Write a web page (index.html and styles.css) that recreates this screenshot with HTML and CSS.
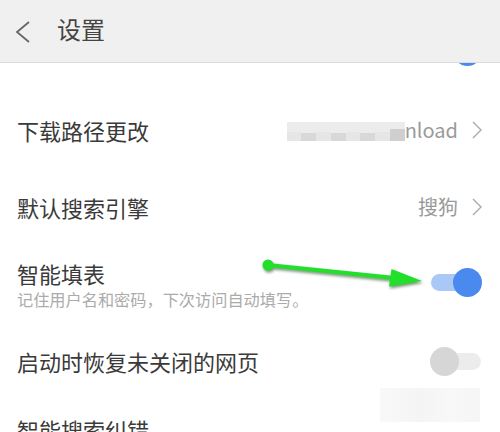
FILE: index.html
```html
<!DOCTYPE html>
<html lang="zh-CN">
<head>
<meta charset="utf-8">
<title>设置</title>
<link rel="stylesheet" href="styles.css">
</head>
<body>
<div class="page">
  <header class="header">
    <svg class="back" width="16" height="22" viewBox="0 0 16 22"><path d="M14 1 L2 11 L14 21" fill="none" stroke="#666" stroke-width="1.8"/></svg>
    <span class="title">设置</span>
  </header>
  <div class="list">
    <div class="row partial">
      <div class="toggle on up"><span class="track"></span><span class="knob"></span></div>
    </div>
    <div class="row">
      <span class="label">下载路径更改</span>
      <span class="value"><span class="blur"><i class="b1"></i><i class="b2"></i><i class="b1"></i><i class="b2"></i><i class="b1"></i><i class="b2"></i><i class="b1"></i><i class="b3"></i></span>nload</span>
      <svg class="chev" width="10" height="18" viewBox="0 0 10 18"><path d="M1 1 L9 9 L1 17" fill="none" stroke="#aaa" stroke-width="1.4"/></svg>
    </div>
    <div class="row">
      <span class="label">默认搜索引擎</span>
      <span class="value">搜狗</span>
      <svg class="chev" width="10" height="18" viewBox="0 0 10 18"><path d="M1 1 L9 9 L1 17" fill="none" stroke="#aaa" stroke-width="1.4"/></svg>
    </div>
    <div class="row tall">
      <div class="texts">
        <span class="label">智能填表</span>
        <span class="sub">记住用户名和密码，下次访问自动填写。</span>
      </div>
      <div class="toggle on shift"><span class="track"></span><span class="knob"></span></div>
    </div>
    <div class="row mid">
      <span class="label">启动时恢复未关闭的网页</span>
      <div class="toggle off"><span class="track"></span><span class="knob"></span></div>
    </div>
    <div class="row mid">
      <span class="label">智能搜索纠错</span>
    </div>
  </div>
  <div class="patch"></div>
  <svg class="arrow" width="500" height="432" viewBox="0 0 500 432">
    <g class="arrowg">
      <circle cx="268" cy="265" r="5.5" fill="#22e02a"/>
      <line x1="268" y1="265" x2="395" y2="278" stroke="#22e02a" stroke-width="4"/>
      <polygon points="422,281 389,286.5 391.5,269" fill="#22e02a"/>
    </g>
  </svg>
</div>
</body>
</html>
```
FILE: styles.css
```css
html, body {
  margin: 0;
  padding: 0;
  background: #fff;
}
.page {
  position: relative;
  width: 500px;
  height: 432px;
  overflow: hidden;
  font-family: "Noto Sans CJK SC", "Noto Sans", sans-serif;
  color: #3a3a3a;
}
.header {
  height: 62px;
  background: #f0f0f0;
  border-bottom: 1px solid #dcdcdc;
  display: flex;
  align-items: center;
  position: relative;
  z-index: 2;
}
.back {
  margin-left: 15px;
  margin-top: 2px;
}
.title {
  margin-left: 26px;
  margin-bottom: 4px;
  font-size: 24px;
  color: #444;
  line-height: 1;
}
.list {
  display: flex;
  flex-direction: column;
}
.row {
  height: 77px;
  display: flex;
  align-items: center;
  padding: 0 18px 0 17px;
  box-sizing: border-box;
}
.row.partial {
  height: 28px;
  justify-content: flex-end;
  align-items: flex-start;
}
.row.tall {
  height: 82px;
}
.row.mid {
  height: 68px;
}
.label {
  font-size: 22px;
  line-height: 26px;
  color: #3a3a3a;
}
.value {
  margin-left: auto;
  font-size: 20px;
  color: #9a9a9a;
  display: flex;
  align-items: center;
}
.blur {
  display: flex;
  align-items: flex-end;
  width: 118px;
  height: 19px;
  background: #ececec;
  margin-top: 3px;
}
.blur i {
  display: block;
  height: 9px;
  flex: 1;
}
.blur .b1 { background: #e6e6e6; }
.blur .b2 { background: #d8d8d8; height: 8px; }
.blur .b3 { background: #cfcfcf; height: 12px; }
.chev {
  margin-left: 14px;
}
.texts {
  display: flex;
  flex-direction: column;
}
.sub {
  font-size: 16.2px;
  line-height: 27px;
  color: #ababab;
}
.toggle {
  margin-left: auto;
  position: relative;
  width: 51px;
  height: 29px;
  flex: none;
}
.toggle .track {
  position: absolute;
  left: 0;
  top: 6px;
  width: 48px;
  height: 17px;
  border-radius: 9px;
}
.toggle .knob {
  position: absolute;
  top: 0;
  width: 29px;
  height: 29px;
  border-radius: 50%;
}
.toggle.on .track { background: #aac8f6; }
.toggle.on .knob { right: 0; background: #4a89ee; }
.toggle.off .track { background: #ececec; left: 3px; }
.toggle.off .knob { left: 0; background: #d6d6d6; }
.toggle.up {
  margin-top: -26px;
}
.toggle.shift {
  margin-bottom: 8px;
}
.row.mid .toggle {
  margin-right: 1px;
}
.patch {
  position: absolute;
  left: 380px;
  top: 388px;
  width: 100px;
  height: 34px;
  background: linear-gradient(90deg, #f7f7f7, #f2f2f2 40%, #f6f6f6 70%, #f3f3f3);
  opacity: 0.8;
}
.arrow {
  position: absolute;
  left: 0;
  top: 0;
  pointer-events: none;
}
.arrowg {
  filter: drop-shadow(1px 2px 1.5px rgba(0, 60, 0, 0.55));
}
```
